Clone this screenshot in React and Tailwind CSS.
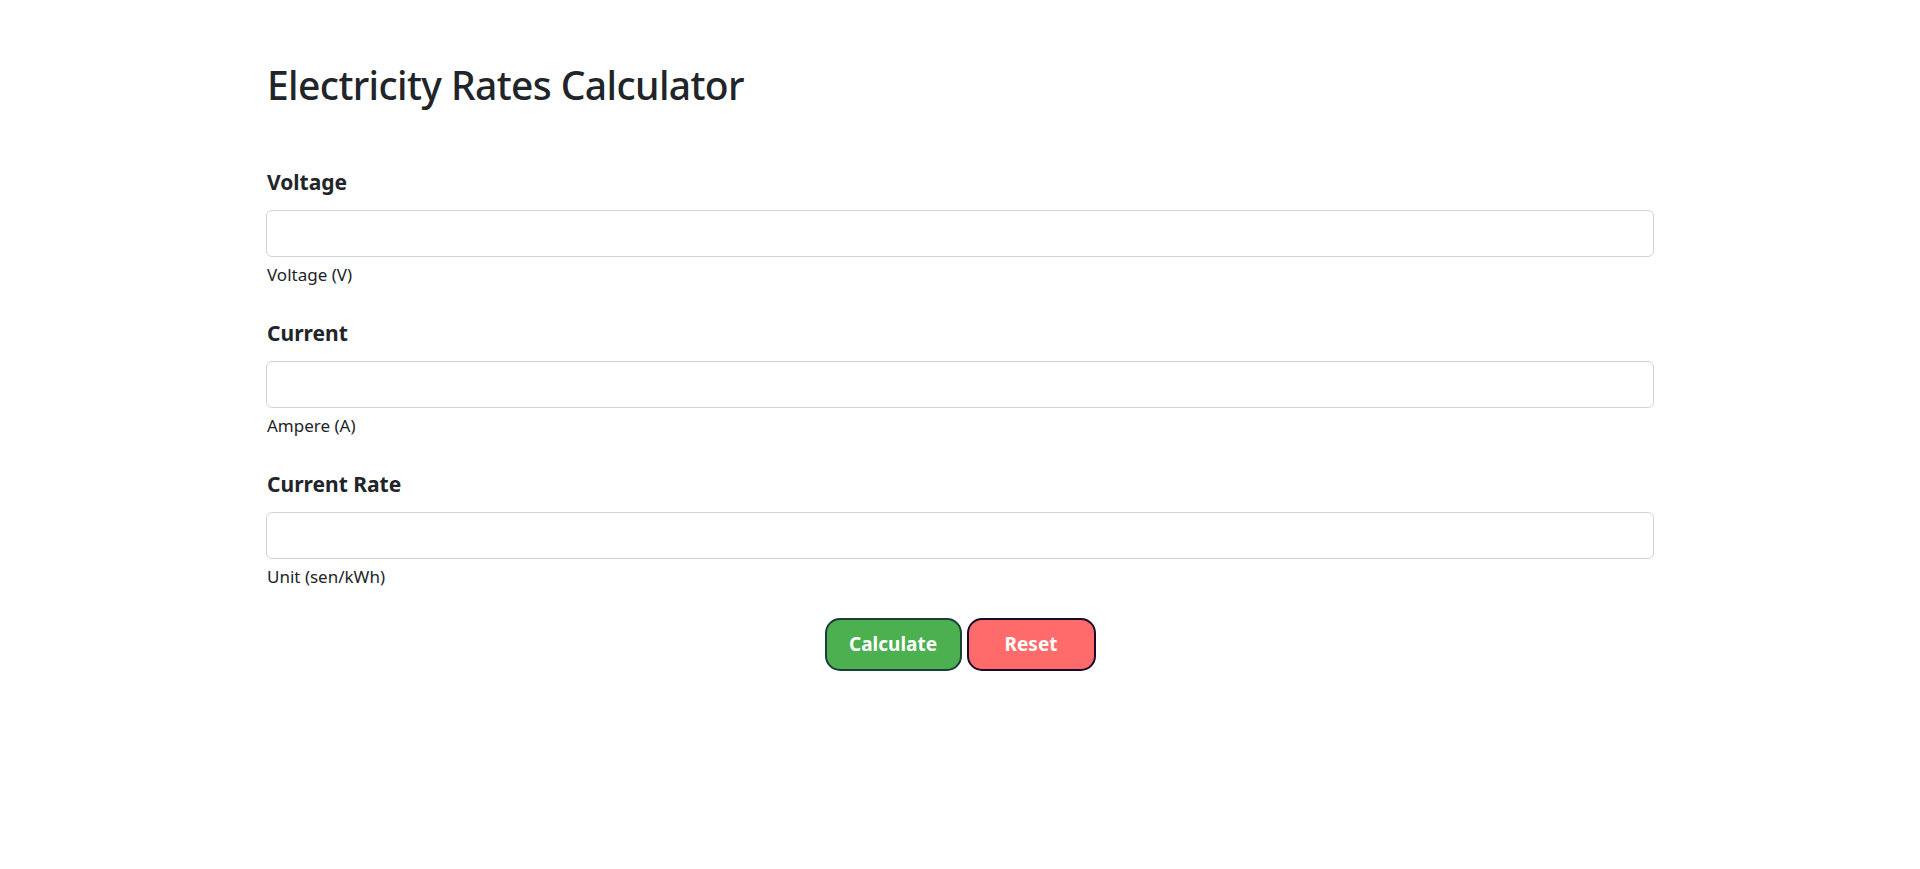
export default function App() {
  const fields = [
    { label: "Voltage", help: "Voltage (V)" },
    { label: "Current", help: "Ampere (A)" },
    { label: "Current Rate", help: "Unit (sen/kWh)" },
  ];
  return (
    <div
      className="min-h-[869px] bg-white text-[#212529]"
      style={{ fontFamily: '"Noto Sans", "Open Sans", sans-serif' }}
    >
      <div className="mx-auto w-[1388px] pt-[61px]">
        <h1 className="pl-[1px] text-[39px] font-medium leading-[47px] tracking-[-0.6px]">
          Electricity Rates Calculator
        </h1>
        <div className="mt-[58px] flex flex-col gap-[30px]">
          {fields.map((f) => (
            <div key={f.label}>
              <label className="block pl-[1px] text-[21px] font-bold leading-[33px]">{f.label}</label>
              <input
                type="text"
                className="mt-[11px] block h-[47px] w-full rounded-md border border-[#ced4da] bg-white px-4 text-[20px] outline-none"
              />
              <div className="mt-[5px] pl-[1px] text-[17px] leading-[25px]">{f.help}</div>
            </div>
          ))}
        </div>
        <div className="mt-[29px] flex justify-center gap-[5px]">
          <button className="h-[53px] w-[137px] rounded-[15px] border-2 border-[#1b3e3a] bg-[#4caf50] text-[19px] font-bold text-white">
            Calculate
          </button>
          <button className="h-[53px] w-[129px] rounded-[15px] border-2 border-[#1a0a2a] bg-[#ff6b6b] text-[19px] font-bold text-white">
            Reset
          </button>
        </div>
      </div>
    </div>
  );
}
